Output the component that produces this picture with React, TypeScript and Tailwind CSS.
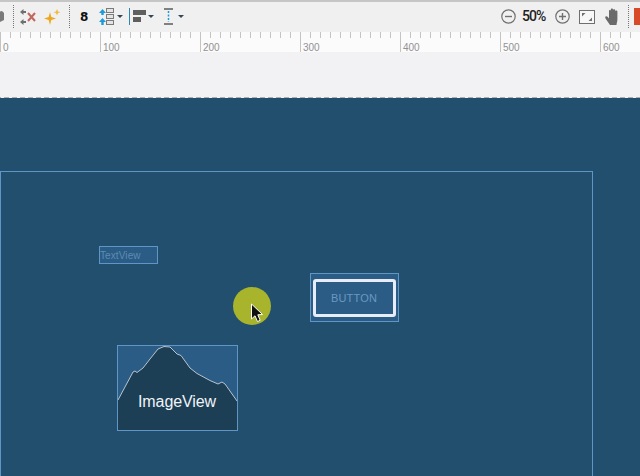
const rulerLabels = [
  { x: 3, text: "0" },
  { x: 103, text: "100" },
  { x: 203, text: "200" },
  { x: 303, text: "300" },
  { x: 403, text: "400" },
  { x: 503, text: "500" },
  { x: 603, text: "600" },
];

function Caret() {
  return <span className="h-0 w-0 border-x-[3px] border-t-[3px] border-x-transparent border-t-[#33475b]" />;
}

function Dots() {
  return <span className="block h-[23px] w-0 border-l border-dotted border-[#777]" />;
}

function Ruler() {
  return (
    <svg width="640" height="20" className="block bg-[#fbfbfb]">
      {Array.from({ length: 65 }).map((_, i) => {
        const major = i % 10 === 0;
        return <line key={i} x1={i * 10 + 0.5} x2={i * 10 + 0.5} y1={0} y2={major ? 20 : 6} stroke="#c4c4c4" />;
      })}
      {rulerLabels.map((l) => (
        <text key={l.x} x={l.x} y={19} fontSize="10" fill="#929292" fontFamily="'Liberation Sans', sans-serif">
          {l.text}
        </text>
      ))}
    </svg>
  );
}

function Toolbar() {
  return (
    <div className="flex h-[32px] items-center border-t-2 border-[#c6c6c6] bg-[#f0f0f0] pb-[1px] font-['Liberation_Sans',sans-serif]">
      <svg width="5" height="16" className="mr-[8px] shrink-0">
        <path d="M-6 4 L2 2 L4 4 V11 L-2 14 Z" fill="#77797b" />
      </svg>
      <Dots />
      <svg width="16" height="16" viewBox="0 0 16 16" className="ml-[6px]">
        <path d="M0 3 L3.5 0 V2 H6 V4 H3.5 V6 Z M0 13 L3.5 10 V12 H6 V14 H3.5 V16 Z" fill="#6d6f71" />
        <path d="M8 4 L15 12 M15 4 L8 12" stroke="#c2675e" strokeWidth="2" />
      </svg>
      <svg width="17" height="16" viewBox="0 0 17 16" className="ml-[8px]">
        <path d="M6 3 L7.3 8 L12 9.5 L7.3 11 L6 16 L4.7 11 L0 9.5 L4.7 8 Z" fill="#eba81f" />
        <path d="M13 0 L14 2.4 L16.5 3.2 L14 4 L13 6.5 L12 4 L9.5 3.2 L12 2.4 Z" fill="#f0bb3c" />
      </svg>
      <span className="ml-[8px]"><Dots /></span>
      <span className="ml-[10px] text-[12px] font-bold text-[#111] font-['DejaVu_Sans',sans-serif]">8</span>
      <svg width="15" height="18" viewBox="0 0 15 18" className="ml-[11px]">
        <path d="M3.5 1 L7 5 H4.7 V7 H2.3 V5 H0 Z M3.5 10 L7 14 H4.7 V17 H2.3 V14 H0 Z" fill="#1d9bd8" />
        <rect x="7.5" y=".5" width="7" height="4" fill="#e4e4e4" stroke="#7b7b7b" />
        <rect x="7.5" y="6.5" width="7" height="4" fill="#e4e4e4" stroke="#7b7b7b" />
        <rect x="7.5" y="12.5" width="7" height="4" fill="#e4e4e4" stroke="#7b7b7b" />
      </svg>
      <span className="ml-[3px] flex"><Caret /></span>
      <span className="ml-[6px] h-[17px] w-px bg-[#2a88b5]" />
      <svg width="13" height="13" viewBox="0 0 13 13" className="ml-[3px]">
        <rect x="0" y="0" width="13" height="5" fill="#5f5f5f" />
        <rect x="0" y="7" width="8" height="5" fill="#5f5f5f" />
      </svg>
      <span className="ml-[2px] flex"><Caret /></span>
      <svg width="9" height="17" viewBox="0 0 9 17" className="ml-[10px]">
        <path d="M0 1 H9 M0 16 H9" stroke="#808080" strokeWidth="2" />
        <path d="M4.5 3 V14" stroke="#1d9bd8" strokeWidth="1.5" strokeDasharray="2 1.5" />
      </svg>
      <span className="ml-[5px] flex"><Caret /></span>
      <span className="flex-1" />
      <svg width="15" height="15" viewBox="0 0 15 15">
        <circle cx="7.5" cy="7.5" r="6.7" fill="none" stroke="#707070" strokeWidth="1.2" />
        <path d="M4 7.5 H11" stroke="#707070" strokeWidth="1.4" />
      </svg>
      <span className="ml-[6px] w-[24px] whitespace-nowrap font-['Roboto',sans-serif] text-[14px] font-medium tracking-[-1px] text-[#222]">50%</span>
      <svg width="15" height="15" viewBox="0 0 15 15" className="ml-[9px]">
        <circle cx="7.5" cy="7.5" r="6.7" fill="none" stroke="#707070" strokeWidth="1.2" />
        <path d="M4 7.5 H11 M7.5 4 V11" stroke="#707070" strokeWidth="1.4" />
      </svg>
      <svg width="16" height="14" viewBox="0 0 16 14" className="ml-[9px]">
        <rect x=".5" y=".5" width="15" height="13" fill="#f7f7f7" stroke="#6f6f6f" />
        <path d="M3 6.5 V3 H6.5 Z M13 7.5 V11 H9.5 Z" fill="#6f6f6f" />
      </svg>
      <svg width="15" height="17" viewBox="0 0 15 17" className="ml-[10px]">
        <path d="M5 17 L.5 10.5 C-.5 8.5 1.5 7.5 2.8 9 L4 10.5 V3 C4 1.6 5.8 1.6 5.8 3 V1.6 C5.8 .2 8 .2 8 1.6 V2.2 C8 .8 10.2 .8 10.2 2.2 V3.6 C10.2 2.2 12.4 2.2 12.4 3.6 V11 C12.4 14 11.5 15 11.5 17 Z" fill="#6a6a6a" />
      </svg>
      <span className="ml-[8px]"><Dots /></span>
      <span className="ml-[5px] h-[17px] w-[6px] bg-[#d8492a]" />
    </div>
  );
}

export default function App() {
  return (
    <div className="flex h-[476px] w-[640px] flex-col overflow-hidden bg-[#f2f2f5]">
      <Toolbar />
      <Ruler />
      <div className="h-[45px] bg-[#f2f2f5]" />
      <div className="h-px bg-[repeating-linear-gradient(90deg,#aeaeae_0,#aeaeae_1px,transparent_1px,transparent_4px,#aeaeae_4px,#aeaeae_8px)]" />
      <div className="relative flex-1 bg-[#224f6d] font-['Liberation_Sans',sans-serif]">
        <div className="absolute left-0 top-[73px] h-[400px] w-[593px] border border-[#5f96c6]" />
        <div className="absolute left-[99px] top-[148px] flex h-[18px] w-[59px] items-center border border-[#5f96c6] bg-[#2a5c85] pt-[1px] text-[10px] leading-none tracking-[0.1px] text-[#5f8bb3]">
          TextView
        </div>
        <div className="absolute left-[310px] top-[175px] flex h-[49px] w-[89px] items-center justify-center border border-[#5f96c6] bg-[#2a5c85]">
          <div className="flex h-[38px] w-[83px] items-center justify-center rounded-[3px] border-[3px] border-[#e8ecf8] pt-[1px] pr-[1px] text-[11px] tracking-[0.2px] text-[#6b98c2]">
            BUTTON
          </div>
        </div>
        <div className="absolute left-[117px] top-[247px] h-[86px] w-[121px] border border-[#5f96c6] bg-[#2a5c85]">
          <svg width="119" height="84" viewBox="0 0 119 84" className="absolute left-0 top-0">
            <path
              d="M0 54 L15 26 L17 25 L19 26.5 L25 22 L32 13 L40 3 Q46 -1 52 1 L59 8 L63 9.5 L72 22 L79 27.5 L92 34.5 L100 38 L104 36 L107 38 L119 55 V84 H0 Z"
              fill="#1c3f56"
            />
            <path
              d="M0 54 L15 26 L17 25 L19 26.5 L25 22 L32 13 L40 3 Q46 -1 52 1 L59 8 L63 9.5 L72 22 L79 27.5 L92 34.5 L100 38 L104 36 L107 38 L119 55"
              fill="none"
              stroke="#b8c4cf"
              strokeWidth="1"
            />
          </svg>
          <span className="absolute inset-x-0 top-[46px] pr-[1px] text-center text-[16px] leading-[20px] tracking-[-0.1px] text-[#f1f3f6]">ImageView</span>
        </div>
        <div className="absolute left-[233px] top-[189px] h-[38px] w-[38px] rounded-full bg-[#a8b42c]" />
        <svg width="14" height="20" viewBox="0 0 14 20" className="absolute left-[250px] top-[205px]">
          <path d="M1.5 1 V16 L5 12.8 L7.5 18.5 L10.2 17.3 L7.8 11.8 L12.5 11.5 Z" fill="#111" stroke="#fff" strokeWidth="1" />
        </svg>
      </div>
    </div>
  );
}
